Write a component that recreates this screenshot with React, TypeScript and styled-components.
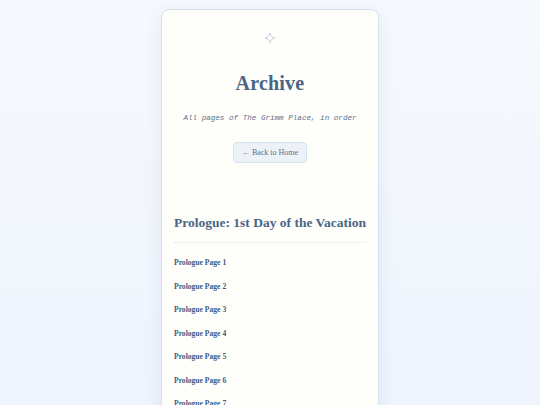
import React from "react"
import styled, { createGlobalStyle } from "styled-components"

const GlobalStyle = createGlobalStyle`
  html, body {
    margin: 0;
    padding: 0;
  }
  body {
    min-height: 405px;
    background: linear-gradient(180deg, #f6f9fd 0%, #eef3fd 100%);
    font-family: "Liberation Serif", serif;
    overflow: hidden;
  }
`

const pages = [1, 2, 3, 4, 5, 6, 7, 8]

const Sparkle = () => (
  <svg width="12" height="12" viewBox="0 0 24 24" fill="none">
    <path
      d="M12 2 C12.8 8 16 11.2 22 12 C16 12.8 12.8 16 12 22 C11.2 16 8 12.8 2 12 C8 11.2 11.2 8 12 2 Z"
      stroke="#b9c9de"
      strokeWidth="1.6"
      strokeLinejoin="round"
    />
  </svg>
)

export default function App() {
  return (
    <>
      <GlobalStyle />
      <Page>
        <Card>
          <Header>
            <Sparkle />
            <Title>Archive</Title>
            <Subtitle>All pages of The Grimm Place, in order</Subtitle>
            <BackButton href="#">← Back to Home</BackButton>
          </Header>
          <Section>
            <SectionTitle>Prologue: 1st Day of the Vacation</SectionTitle>
            <PageList>
              {pages.map((n) => (
                <li key={n}>
                  <PageLink href="#">Prologue Page {n}</PageLink>
                </li>
              ))}
            </PageList>
          </Section>
        </Card>
      </Page>
    </>
  )
}

const Page = styled.div`
  display: flex;
  justify-content: center;
  padding-top: 9px;
`

const Card = styled.main`
  width: 218px;
  box-sizing: border-box;
  background: #fefefa;
  border: 1px solid #d9e1ec;
  border-radius: 8px;
  box-shadow: 0 4px 18px rgba(90, 120, 170, 0.12);
  padding: 22px 12px 40px;
`

const Header = styled.header`
  display: flex;
  flex-direction: column;
  align-items: center;
`

const Title = styled.h1`
  margin: 25px 0 0;
  font-family: "Liberation Serif", serif;
  font-weight: 600;
  font-size: 20px;
  line-height: 28px;
  color: #4b6584;
  letter-spacing: 0.2px;
`

const Subtitle = styled.p`
  margin: 15px 0 0;
  font-family: "Liberation Mono", monospace;
  font-style: italic;
  font-size: 7.6px;
  line-height: 12px;
  color: #5f718b;
`

const BackButton = styled.a`
  margin-top: 18px;
  display: inline-flex;
  align-items: center;
  height: 21px;
  padding: 0 8px;
  box-sizing: border-box;
  background: #edf2f8;
  border: 1px solid #d8e2ee;
  border-radius: 4px;
  font-family: "Liberation Serif", serif;
  font-size: 8px;
  color: #57708f;
  text-decoration: none;
`

const Section = styled.section`
  margin-top: 50px;
`

const SectionTitle = styled.h2`
  margin: 0;
  padding-bottom: 9px;
  border-bottom: 1px dotted #e0e5ec;
  font-family: "Liberation Serif", serif;
  font-weight: 700;
  font-size: 13.5px;
  line-height: 20px;
  color: #4a6586;
  white-space: nowrap;
`

const PageList = styled.ul`
  list-style: none;
  margin: 0;
  padding: 14px 0 0;
  display: flex;
  flex-direction: column;
  gap: 11.5px;
`

const PageLink = styled.a`
  display: block;
  font-family: "Liberation Serif", serif;
  font-weight: 700;
  font-size: 7.6px;
  line-height: 12px;
  color: #3f5b82;
  text-decoration: none;
`
